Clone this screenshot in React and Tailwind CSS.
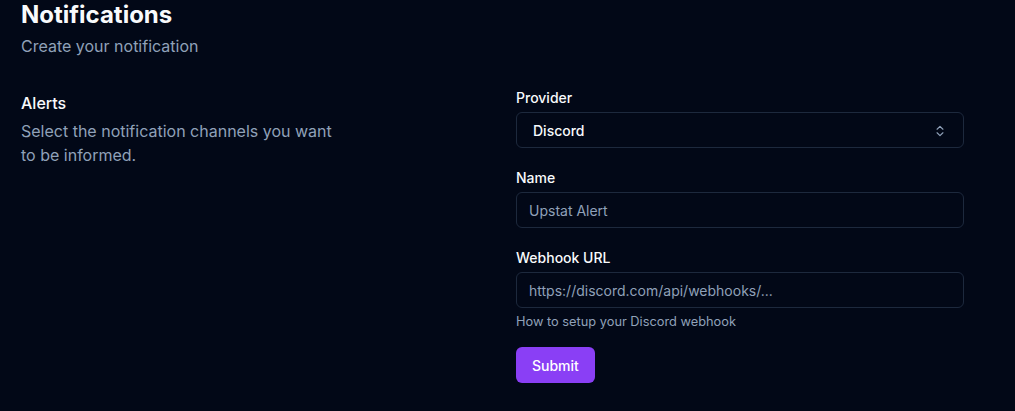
import { useState } from "react";

const ChevronsUpDown = () => (
  <svg
    width="14"
    height="14"
    viewBox="0 0 24 24"
    fill="none"
    stroke="currentColor"
    strokeWidth="2"
    strokeLinecap="round"
    strokeLinejoin="round"
  >
    <path d="m7 15 5 5 5-5" />
    <path d="m7 9 5-5 5 5" />
  </svg>
);

const Field = ({ label, children }) => (
  <div>
    <label className="block text-sm font-medium leading-4 text-slate-50 mb-1.5">
      {label}
    </label>
    {children}
  </div>
);

const NotificationsPage = () => {
  const [name, setName] = useState("");
  const [url, setUrl] = useState("");

  return (
    <div
      className="min-h-screen bg-[#020817] text-slate-50 pl-[21px]"
      style={{ fontFamily: "Inter, 'Noto Sans', sans-serif" }}
    >
      <h1 className="text-2xl font-bold leading-tight">Notifications</h1>
      <p className="mt-1 text-base text-slate-400">Create your notification</p>

      <div className="flex mt-8">
        <div className="w-[495px] shrink-0 pt-px">
          <h3 className="text-base font-medium leading-6">Alerts</h3>
          <p className="mt-1 max-w-xs text-base leading-6 text-slate-400">
            Select the notification channels you want to be informed.
          </p>
        </div>

        <form className="w-[448px] flex flex-col gap-[22px]">
          <Field label="Provider">
            <div className="flex h-9 items-center justify-between rounded-md border border-slate-800 pl-4 pr-4 pt-px text-sm font-medium">
              <span>Discord</span>
              <span className="text-slate-400">
                <ChevronsUpDown />
              </span>
            </div>
          </Field>

          <Field label="Name">
            <input
              value={name}
              onChange={(e) => setName(e.target.value)}
              placeholder="Upstat Alert"
              className="h-9 w-full rounded-md border border-slate-800 bg-transparent px-3 pt-px text-sm outline-none placeholder:text-slate-400"
            />
          </Field>

          <div>
            <Field label="Webhook URL">
              <input
                value={url}
                onChange={(e) => setUrl(e.target.value)}
                placeholder="https://discord.com/api/webhooks/..."
                className="h-9 w-full rounded-md border border-slate-800 bg-transparent px-3 pt-px text-sm outline-none placeholder:text-slate-400"
              />
            </Field>
            <p className="mt-1 text-[0.8rem] leading-[1.2rem] text-slate-400">
              How to setup your Discord webhook
            </p>
            <button
              type="button"
              className="mt-4 h-9 rounded-md bg-[#8a3ff5] px-4 pt-px text-sm font-medium text-white"
            >
              Submit
            </button>
          </div>
        </form>
      </div>
    </div>
  );
};

export default NotificationsPage;
